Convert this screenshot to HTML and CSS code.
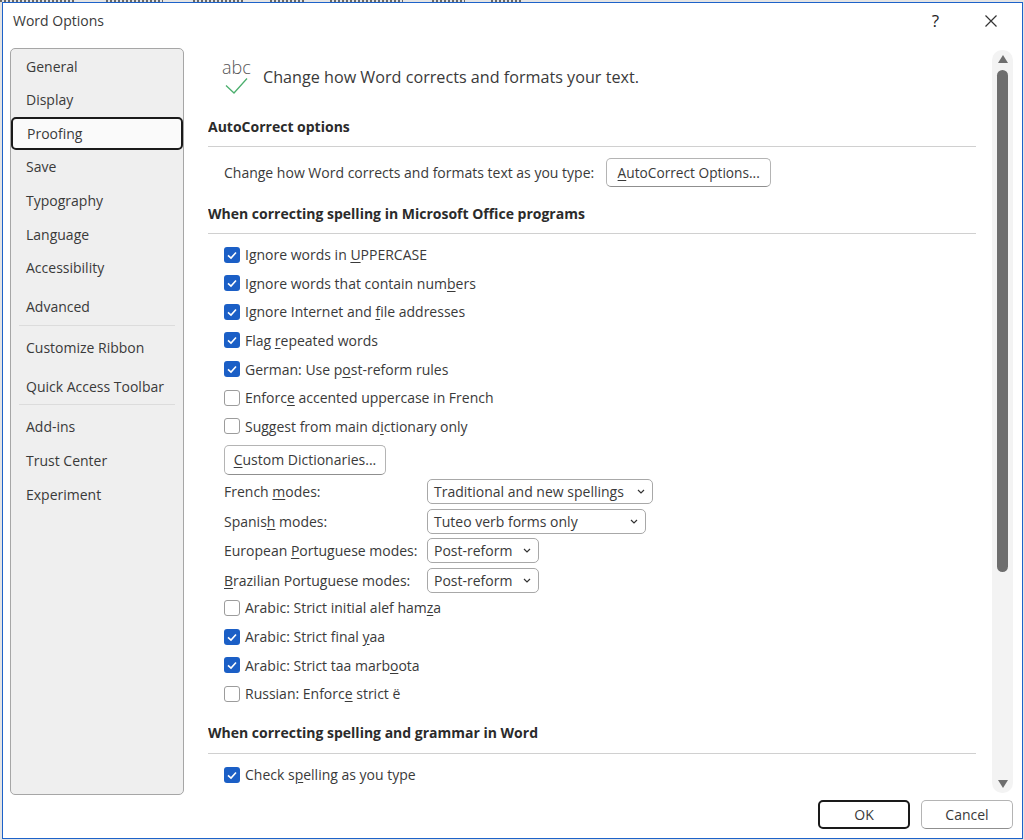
FILE: index.html
```html
<!DOCTYPE html>
<html lang="en">
<head>
    <meta charset="UTF-8">
    <title>Word Options</title>
    <link rel="stylesheet" href="styles.css">
</head>
<body>
    <!-- bottom edge of the app ribbon tabs, just peeking out above the dialog -->
    <svg class="ribbon-edge" width="1024" height="2" viewBox="0 0 1024 2"><path d="M0 1H75M106 1H163M193 1H243M270 1H305M330 1H403M432 1H465M491 1H522" stroke="#666" stroke-width="2" stroke-dasharray="2 2" fill="none"/></svg>

    <div class="window">
        <div class="titlebar">
            <span class="title">Word Options</span>
            <span class="help">?</span>
            <svg class="close" width="12" height="12" viewBox="0 0 12 12"><path d="M0.5 0.5L11.5 11.5M11.5 0.5L0.5 11.5" stroke="#333" stroke-width="1.2" fill="none"/></svg>
        </div>

        <div class="body">
            <div class="sidebar">
                <div class="nav-item">General</div>
                <div class="nav-item">Display</div>
                <div class="nav-item selected">Proofing</div>
                <div class="nav-item">Save</div>
                <div class="nav-item">Typography</div>
                <div class="nav-item">Language</div>
                <div class="nav-item">Accessibility</div>
                <div class="nav-item gap">Advanced</div>
                <div class="nav-sep"></div>
                <div class="nav-item">Customize Ribbon</div>
                <div class="nav-item gap">Quick Access Toolbar</div>
                <div class="nav-sep"></div>
                <div class="nav-item">Add-ins</div>
                <div class="nav-item">Trust Center</div>
                <div class="nav-item">Experiment</div>
            </div>

            <div class="main">
                <div class="page-head">
                    <div class="page-icon">
                        <span class="abc">abc</span>
                        <svg width="24" height="17" viewBox="0 0 24 17"><path d="M1 8.5L9 16L22 1.5" stroke="#4caf6e" stroke-width="1.3" fill="none"/></svg>
                    </div>
                    <span class="page-title">Change how Word corrects and formats your text.</span>
                </div>

                <div class="section-head first">AutoCorrect options</div>
                <div class="autocorrect-row">
                    <span>Change how Word corrects and formats text as you type:</span>
                    <button class="btn autocorrect-btn"><u>A</u>utoCorrect Options...</button>
                </div>

                <div class="section-head">When correcting spelling in Microsoft Office programs</div>
                <div class="checks">
                    <div class="check-row"><span class="box on"></span>Ignore words in <u>U</u>PPERCASE</div>
                    <div class="check-row"><span class="box on"></span>Ignore words that contain num<u>b</u>ers</div>
                    <div class="check-row"><span class="box on"></span>Ignore Internet and <u>f</u>ile addresses</div>
                    <div class="check-row"><span class="box on"></span>Flag <u>r</u>epeated words</div>
                    <div class="check-row"><span class="box on"></span>German: Use p<u>o</u>st-reform rules</div>
                    <div class="check-row"><span class="box"></span>Enforc<u>e</u> accented uppercase in French</div>
                    <div class="check-row"><span class="box"></span>Suggest from main d<u>i</u>ctionary only</div>
                </div>
                <button class="btn dict-btn"><u>C</u>ustom Dictionaries...</button>

                <div class="modes">
                    <div class="mode-row">
                        <span class="mode-label">French <u>m</u>odes:</span>
                        <div class="select w-french">Traditional and new spellings<svg class="chev" width="8" height="5" viewBox="0 0 8 5"><path d="M1 1L4 4L7 1" stroke="#333" stroke-width="1.2" fill="none"/></svg></div>
                    </div>
                    <div class="mode-row">
                        <span class="mode-label">Spanis<u>h</u> modes:</span>
                        <div class="select w-spanish">Tuteo verb forms only<svg class="chev" width="8" height="5" viewBox="0 0 8 5"><path d="M1 1L4 4L7 1" stroke="#333" stroke-width="1.2" fill="none"/></svg></div>
                    </div>
                    <div class="mode-row">
                        <span class="mode-label">European <u>P</u>ortuguese modes:</span>
                        <div class="select w-port">Post-reform<svg class="chev" width="8" height="5" viewBox="0 0 8 5"><path d="M1 1L4 4L7 1" stroke="#333" stroke-width="1.2" fill="none"/></svg></div>
                    </div>
                    <div class="mode-row">
                        <span class="mode-label"><u>B</u>razilian Portuguese modes:</span>
                        <div class="select w-port">Post-reform<svg class="chev" width="8" height="5" viewBox="0 0 8 5"><path d="M1 1L4 4L7 1" stroke="#333" stroke-width="1.2" fill="none"/></svg></div>
                    </div>
                </div>

                <div class="checks after-modes">
                    <div class="check-row"><span class="box"></span>Arabic: Strict initial alef ham<u>z</u>a</div>
                    <div class="check-row"><span class="box on"></span>Arabic: Strict final <u>y</u>aa</div>
                    <div class="check-row"><span class="box on"></span>Arabic: Strict taa marb<u>o</u>ota</div>
                    <div class="check-row"><span class="box"></span>Russian: Enforc<u>e</u> strict ë</div>
                </div>

                <div class="section-head third">When correcting spelling and grammar in Word</div>
                <div class="checks">
                    <div class="check-row"><span class="box on"></span>Check s<u>p</u>elling as you type</div>
                </div>
            </div>

            <div class="scrollbar">
                <span class="arrow up"></span>
                <div class="thumb"></div>
                <span class="arrow down"></span>
            </div>
        </div>

        <div class="footer">
            <button class="btn footer-btn default">OK</button>
            <button class="btn footer-btn">Cancel</button>
        </div>
    </div>
</body>
</html>
```
FILE: styles.css
```css
* {
    box-sizing: border-box;
}

html, body {
    margin: 0;
    height: 100%;
}

body {
    padding: 0 1px 1px 2px;
    background: #e4e4e4;
    font-family: "Open Sans", "Noto Sans", sans-serif;
    font-size: 14px;
    color: #3a3a3a;
    overflow: hidden;
}

u {
    text-underline-offset: 2px;
}

.ribbon-edge {
    display: block;
    margin-left: -2px;
}

.window {
    height: 837px;
    display: flex;
    flex-direction: column;
    background: white;
    border: 1px solid #1d62c9;
}

.titlebar {
    height: 45px;
    flex: none;
    display: flex;
    align-items: center;
    padding: 0 25px 10px 10px;
}

.title {
    flex: 1;
}

.help {
    margin-right: 46px;
    font-size: 17px;
    color: #222;
}

.body {
    height: 747px;
    flex: none;
    display: flex;
    padding-left: 7px;
}

.sidebar {
    width: 174px;
    flex: none;
    background: #efefef;
    border: 1px solid #a6a6a6;
    border-radius: 5px;
    padding-top: 0.4px;
}

.nav-item {
    height: 33.6px;
    display: flex;
    align-items: center;
    padding-left: 15px;
}

.nav-item.selected {
    background: #fafafa;
    border: 2px solid #1a1a1a;
    border-radius: 5px;
    padding-left: 14px;
}

.nav-item.gap {
    margin-top: 5.4px;
}

.nav-sep {
    height: 1px;
    margin: 1px 8px 5px;
    background: #dcdcdc;
}

.main {
    width: 768px;
    flex: none;
    margin-left: 24px;
    overflow: hidden;
}

.page-head {
    display: flex;
    align-items: flex-start;
    height: 59px;
    padding: 9px 0 0 14px;
}

.page-icon {
    width: 41px;
    height: 37px;
    display: flex;
    flex-direction: column;
    align-items: flex-start;
}

.page-icon svg {
    margin-left: 3px;
}

.abc {
    font-size: 18px;
    font-weight: 300;
    line-height: 20px;
    color: #555;
}

.page-title {
    margin-top: 9px;
    font-size: 16.17px;
    line-height: 22px;
}

.section-head {
    height: 31px;
    margin-top: 16px;
    padding-bottom: 10px;
    display: flex;
    align-items: center;
    font-weight: 700;
    color: #2b2b2b;
    border-bottom: 1px solid #d0d0d0;
}

.section-head.first {
    margin-top: 9px;
}

.section-head.third {
    margin-top: 14.9px;
}

.autocorrect-row {
    display: flex;
    align-items: center;
    gap: 12px;
    margin-top: 11px;
    padding-left: 16px;
}

.btn {
    height: 29px;
    font: inherit;
    color: inherit;
    background: white;
    border: 1px solid #b4b4b4;
    border-bottom-color: #8f8f8f;
    border-radius: 5px;
    padding: 0;
}

.autocorrect-btn {
    width: 165px;
    font-size: 13.7px;
}

.dict-btn {
    display: block;
    width: 162px;
    height: 30px;
    margin: 4.4px 0 4px 16px;
}

.checks {
    padding-left: 16px;
}

.section-head + .checks {
    margin-top: 6.4px;
}

.checks.after-modes {
    margin-top: 0.9px;
}

.check-row {
    height: 28.6px;
    display: flex;
    align-items: center;
    white-space: pre;
}

.box {
    width: 16px;
    height: 16px;
    flex: none;
    margin-right: 5px;
    background: white;
    border: 1px solid #9c9c9c;
    border-radius: 3px;
}

.box.on {
    border: none;
    background: #1b5fc6 url("data:image/svg+xml,%3Csvg xmlns='http://www.w3.org/2000/svg' width='16' height='16'%3E%3Cpath d='M4 8.3L7 11L12 5.5' stroke='white' stroke-width='1.6' fill='none'/%3E%3C/svg%3E");
}

.modes {
    display: flex;
    flex-direction: column;
    gap: 4.6px;
    padding-left: 16px;
}

.mode-row {
    height: 25px;
    display: flex;
    align-items: center;
}

.mode-label {
    width: 203px;
    flex: none;
}

.select {
    height: 25px;
    display: flex;
    align-items: center;
    justify-content: space-between;
    padding: 0 7px 0 6px;
    border: 1px solid #a8a8a8;
    border-radius: 5px;
}

.w-french {
    width: 226px;
}

.w-spanish {
    width: 219px;
}

.w-port {
    width: 112px;
}

.scrollbar {
    width: 21px;
    height: 743px;
    flex: none;
    margin: 2px 0 0 16px;
    background: #f3f3f3;
    border-radius: 10px;
    display: flex;
    flex-direction: column;
    align-items: center;
    padding: 5px 0;
}

.thumb {
    width: 11px;
    height: 502px;
    margin-top: 7px;
    background: #6e6e6e;
    border-radius: 6px;
}

.arrow {
    width: 0;
    height: 0;
    border-left: 5.5px solid transparent;
    border-right: 5.5px solid transparent;
}

.arrow.up {
    border-bottom: 8px solid #6e6e6e;
}

.arrow.down {
    margin-top: auto;
    border-top: 8px solid #6e6e6e;
}

.footer {
    flex: 1;
    display: flex;
    justify-content: flex-end;
    gap: 11px;
    padding: 5px 9px 0 0;
}

.footer-btn {
    width: 92px;
    height: 29px;
}

.footer-btn.default {
    border: 2px solid #1a1a1a;
}
```
